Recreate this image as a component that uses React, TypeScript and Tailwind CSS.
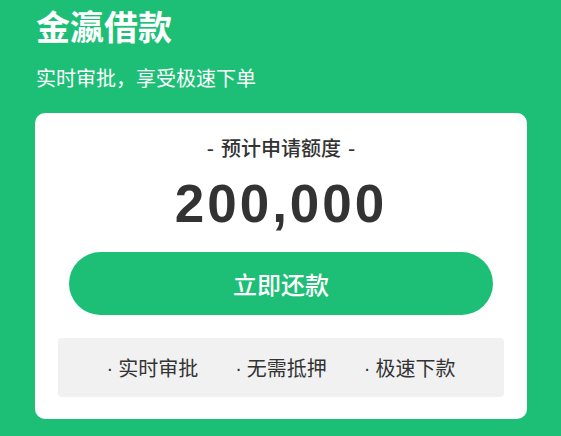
export default function App() {
  const cjk = { fontFamily: '"Noto Sans CJK SC", "Noto Sans", sans-serif' };
  const dot = { fontFamily: '"Liberation Sans", Arial, sans-serif' };
  const items = ["实时审批", "无需抵押", "极速下款"];
  return (
    <div className="w-[561px] h-[436px] overflow-hidden bg-[#1cbf75]" style={cjk}>
      <div className="pl-[36px] pt-[6px]">
        <div className="text-[34px] leading-[40px] font-bold text-white">金瀛借款</div>
        <div className="mt-[18px] text-[20px] leading-[28px] text-white">实时审批，享受极速下单</div>
      </div>
      <div className="ml-[35px] w-[492px] mt-[21px] h-[306px] rounded-[10px] bg-white flex flex-col items-center pt-[20px]">
        <div className="flex items-center gap-[7px] text-[20px] leading-[30px] font-medium text-[#333333]">
          <span>-</span>
          <span>预计申请额度</span>
          <span>-</span>
        </div>
        <div
          className="mt-[11px] text-[53px] leading-[60px] font-bold text-[#333333] tracking-[3px]"
          style={dot}
        >
          200,000
        </div>
        <div className="mt-[18px] w-[424px] h-[63px] rounded-full bg-[#1cbf75] flex items-center justify-center text-white text-[24px] font-medium">
          立即还款
        </div>
        <div className="mt-[23px] w-[446px] h-[59px] rounded-[4px] bg-[#f1f1f1] flex items-center justify-center gap-[37px] text-[20px] text-[#333333]">
          {items.map((t) => (
            <span key={t} className="flex items-center">
              <span style={dot} className="mr-[5px]">·</span>
              <span>{t}</span>
            </span>
          ))}
        </div>
      </div>
    </div>
  );
}
